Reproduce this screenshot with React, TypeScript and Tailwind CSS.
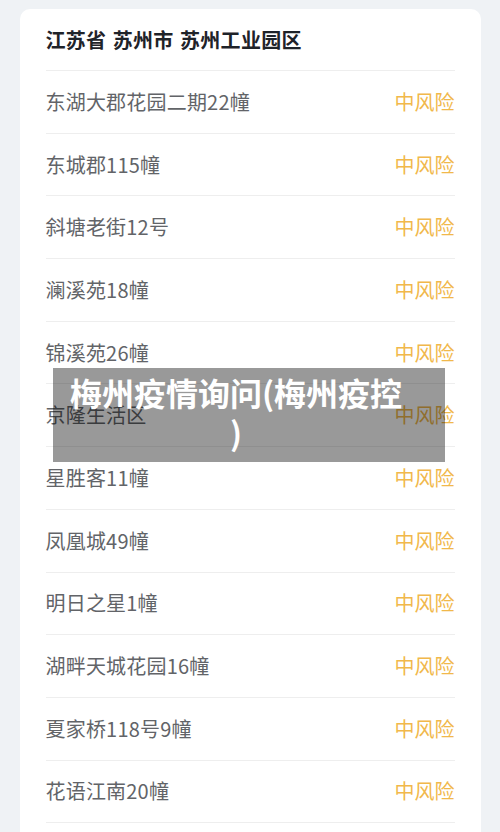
const rows = [
  "东湖大郡花园二期22幢",
  "东城郡115幢",
  "斜塘老街12号",
  "澜溪苑18幢",
  "锦溪苑26幢",
  "京隆生活区",
  "星胜客11幢",
  "凤凰城49幢",
  "明日之星1幢",
  "湖畔天城花园16幢",
  "夏家桥118号9幢",
  "花语江南20幢",
];

export default function App() {
  return (
    <div
      className="relative h-[832px] overflow-hidden bg-[#eff2f5] px-[19.5px] pt-[9px]"
      style={{ fontFamily: '"Noto Sans CJK SC", "Noto Sans", sans-serif' }}
    >
      <div className="rounded-[10px] bg-white px-[26px] pb-10">
        <div className="flex h-[62px] items-center border-b border-[#eeeeee]">
          <h1 className="text-[20px] font-bold leading-7 tracking-[0.3px] text-[#1f2329] [word-spacing:1.5px]">
            江苏省 苏州市 苏州工业园区
          </h1>
        </div>
        {rows.map((name) => (
          <div
            key={name}
            className="flex h-[62.7px] items-center justify-between border-b border-[#eeeeee]"
          >
            <span className="text-[20px] leading-7 tracking-[0.2px] text-[#626468]">{name}</span>
            <span className="text-[20px] leading-7 text-[#f1b84b]">中风险</span>
          </div>
        ))}
      </div>

      <div className="absolute left-[53px] top-[368px] flex h-[94px] w-[392px] items-center bg-black/40 pb-[6px] pl-[13px] pr-[39px]">
        <p className="w-full text-center text-[32px] font-bold leading-[40px] text-white [line-break:anywhere]">
          梅州疫情询问(梅州疫控)
        </p>
      </div>
    </div>
  );
}
